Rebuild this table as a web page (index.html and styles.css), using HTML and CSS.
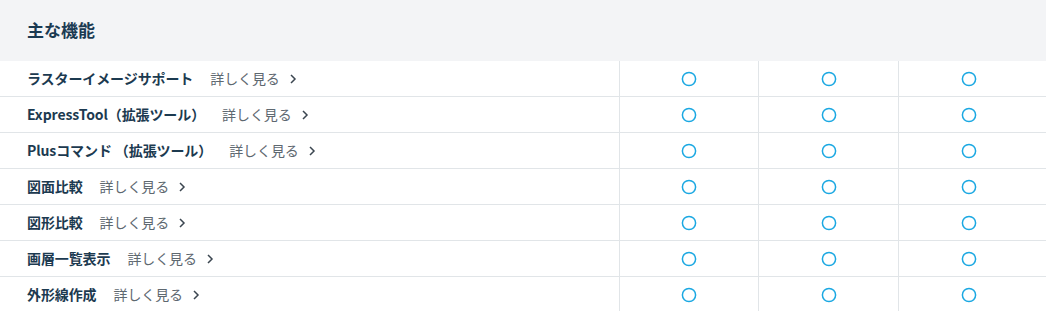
FILE: index.html
```html
<!DOCTYPE html>
<html lang="ja">
<head>
<meta charset="utf-8">
<link rel="stylesheet" href="styles.css">
</head>
<body>
<div class="section">
  <div class="head"><h2 class="title">主な機能</h2></div>
  <div class="table">
    <div class="row">
      <div class="name"><span class="label">ラスターイメージサポート</span><a class="more">詳しく見る<svg class="chev" viewBox="0 0 8 12"><path d="M2 2l4 4-4 4"/></svg></a></div>
      <div class="cell"><svg class="mark" viewBox="0 0 16 16"><circle cx="8" cy="8" r="6.6"/></svg></div>
      <div class="cell"><svg class="mark" viewBox="0 0 16 16"><circle cx="8" cy="8" r="6.6"/></svg></div>
      <div class="cell"><svg class="mark" viewBox="0 0 16 16"><circle cx="8" cy="8" r="6.6"/></svg></div>
      <div class="rest"></div>
    </div>
    <div class="row">
      <div class="name"><span class="label">ExpressTool（拡張ツール）</span><a class="more">詳しく見る<svg class="chev" viewBox="0 0 8 12"><path d="M2 2l4 4-4 4"/></svg></a></div>
      <div class="cell"><svg class="mark" viewBox="0 0 16 16"><circle cx="8" cy="8" r="6.6"/></svg></div>
      <div class="cell"><svg class="mark" viewBox="0 0 16 16"><circle cx="8" cy="8" r="6.6"/></svg></div>
      <div class="cell"><svg class="mark" viewBox="0 0 16 16"><circle cx="8" cy="8" r="6.6"/></svg></div>
      <div class="rest"></div>
    </div>
    <div class="row">
      <div class="name"><span class="label">Plusコマンド （拡張ツール）</span><a class="more">詳しく見る<svg class="chev" viewBox="0 0 8 12"><path d="M2 2l4 4-4 4"/></svg></a></div>
      <div class="cell"><svg class="mark" viewBox="0 0 16 16"><circle cx="8" cy="8" r="6.6"/></svg></div>
      <div class="cell"><svg class="mark" viewBox="0 0 16 16"><circle cx="8" cy="8" r="6.6"/></svg></div>
      <div class="cell"><svg class="mark" viewBox="0 0 16 16"><circle cx="8" cy="8" r="6.6"/></svg></div>
      <div class="rest"></div>
    </div>
    <div class="row">
      <div class="name"><span class="label">図面比較</span><a class="more">詳しく見る<svg class="chev" viewBox="0 0 8 12"><path d="M2 2l4 4-4 4"/></svg></a></div>
      <div class="cell"><svg class="mark" viewBox="0 0 16 16"><circle cx="8" cy="8" r="6.6"/></svg></div>
      <div class="cell"><svg class="mark" viewBox="0 0 16 16"><circle cx="8" cy="8" r="6.6"/></svg></div>
      <div class="cell"><svg class="mark" viewBox="0 0 16 16"><circle cx="8" cy="8" r="6.6"/></svg></div>
      <div class="rest"></div>
    </div>
    <div class="row">
      <div class="name"><span class="label">図形比較</span><a class="more">詳しく見る<svg class="chev" viewBox="0 0 8 12"><path d="M2 2l4 4-4 4"/></svg></a></div>
      <div class="cell"><svg class="mark" viewBox="0 0 16 16"><circle cx="8" cy="8" r="6.6"/></svg></div>
      <div class="cell"><svg class="mark" viewBox="0 0 16 16"><circle cx="8" cy="8" r="6.6"/></svg></div>
      <div class="cell"><svg class="mark" viewBox="0 0 16 16"><circle cx="8" cy="8" r="6.6"/></svg></div>
      <div class="rest"></div>
    </div>
    <div class="row">
      <div class="name"><span class="label">画層一覧表示</span><a class="more">詳しく見る<svg class="chev" viewBox="0 0 8 12"><path d="M2 2l4 4-4 4"/></svg></a></div>
      <div class="cell"><svg class="mark" viewBox="0 0 16 16"><circle cx="8" cy="8" r="6.6"/></svg></div>
      <div class="cell"><svg class="mark" viewBox="0 0 16 16"><circle cx="8" cy="8" r="6.6"/></svg></div>
      <div class="cell"><svg class="mark" viewBox="0 0 16 16"><circle cx="8" cy="8" r="6.6"/></svg></div>
      <div class="rest"></div>
    </div>
    <div class="row">
      <div class="name"><span class="label">外形線作成</span><a class="more">詳しく見る<svg class="chev" viewBox="0 0 8 12"><path d="M2 2l4 4-4 4"/></svg></a></div>
      <div class="cell"><svg class="mark" viewBox="0 0 16 16"><circle cx="8" cy="8" r="6.6"/></svg></div>
      <div class="cell"><svg class="mark" viewBox="0 0 16 16"><circle cx="8" cy="8" r="6.6"/></svg></div>
      <div class="cell"><svg class="mark" viewBox="0 0 16 16"><circle cx="8" cy="8" r="6.6"/></svg></div>
      <div class="rest"></div>
    </div>
  </div>
</div>
</body>
</html>
```
FILE: styles.css
```css
* { box-sizing: border-box; }
html, body { margin: 0; padding: 0; background: #fff; }
body {
  font-family: "Noto Sans CJK JP", "Noto Sans", sans-serif;
  color: #1c3a50;
}
.head {
  background: #f3f4f6;
  height: 61px;
  display: flex;
  align-items: center;
  padding-left: 27px;
  padding-bottom: 3px;
}
.title {
  margin: 0;
  font-size: 17px;
  font-weight: 700;
  color: #1a3a52;
  line-height: 1;
}
.row {
  display: grid;
  grid-template-columns: 619px 139px 140px 140px 1fr;
  height: 36px;
  border-bottom: 1px solid #e1e5e8;
}
.row:last-child { border-bottom: none; height: 35px; }
.name {
  display: flex;
  align-items: center;
  padding-left: 27px;
  padding-bottom: 2px;
  gap: 17px;
  font-size: 14px;
  letter-spacing: -0.1px;
}
.label {
  font-weight: 700;
  color: #1c3a50;
}
.more {
  color: #5e6870;
  display: flex;
  align-items: center;
  gap: 9px;
}
.chev {
  width: 8px;
  height: 12px;
  margin-top: 2px;
  fill: none;
  stroke: #3b4650;
  stroke-width: 1.5;
}
.cell {
  border-left: 1px solid #e1e5e8;
  display: flex;
  align-items: center;
  justify-content: center;
}
.mark {
  width: 16px;
  height: 16px;
  fill: none;
  stroke: #1ba8e2;
  stroke-width: 1.5;
}
```
